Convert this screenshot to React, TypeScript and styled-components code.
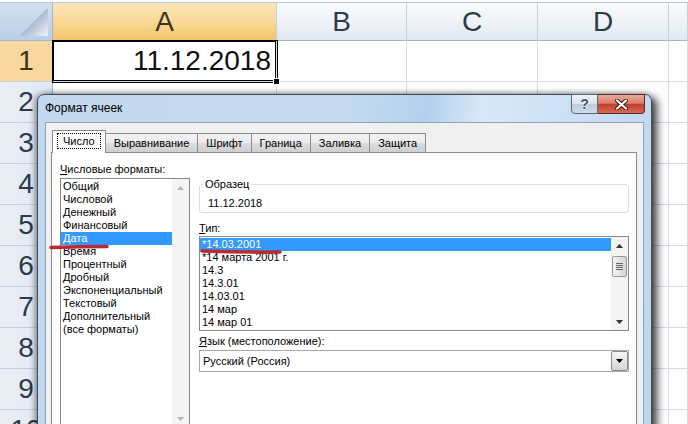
import React from 'react';
import styled, { createGlobalStyle } from 'styled-components';

const GlobalStyle = createGlobalStyle`
  html, body {
    margin: 0;
    padding: 0;
    width: 688px;
    height: 424px;
    overflow: hidden;
    background: #fff;
  }
  body {
    font-family: "Liberation Sans", Arial, sans-serif;
  }
`;

const columns = ['A', 'B', 'C', 'D', ''];
const rows = [1, 2, 3, 4, 5, 6, 7, 8, 9, 10];

const formats = [
    'Общий',
    'Числовой',
    'Денежный',
    'Финансовый',
    'Дата',
    'Время',
    'Процентный',
    'Дробный',
    'Экспоненциальный',
    'Текстовый',
    'Дополнительный',
    '(все форматы)',
];

const types = [
    '*14.03.2001',
    '*14 марта 2001 г.',
    '14.3',
    '14.3.01',
    '14.03.01',
    '14 мар',
    '14 мар 01',
];

const tabs = ['Число', 'Выравнивание', 'Шрифт', 'Граница', 'Заливка', 'Защита'];

const Arrow = ({ dir, color }: { dir: 'up' | 'down'; color: string }) => (
    <svg width="7" height="4" viewBox="0 0 7 4">
        <path d={dir === 'up' ? 'M0 4 L3.5 0 L7 4 Z' : 'M0 0 L7 0 L3.5 4 Z'} fill={color} />
    </svg>
);

const App: React.FC = () => (
    <Page>
        <GlobalStyle />
        <Sheet>
            <Corner />
            {columns.map((c, i) => (
                <ColHeader key={c + i} $active={c === 'A'}>
                    {c}
                </ColHeader>
            ))}
            {rows.map((r) => (
                <React.Fragment key={r}>
                    <RowHeader $active={r === 1}>{r}</RowHeader>
                    {columns.map((c, i) => (
                        <Cell key={c + i} $selected={r === 1 && c === 'A'}>
                            {r === 1 && c === 'A' ? '11.12.2018' : ''}
                        </Cell>
                    ))}
                </React.Fragment>
            ))}
        </Sheet>

        <Dialog>
            <TitleBar>
                <Title>Формат ячеек</Title>
                <CaptionButtons>
                    <HelpButton>?</HelpButton>
                    <CloseButton>
                        <svg width="13" height="11" viewBox="0 0 13 11">
                            <path
                                d="M2 1.5 L11 9.5 M11 1.5 L2 9.5"
                                stroke="#3b1a16"
                                strokeWidth="4"
                                strokeLinecap="round"
                            />
                            <path
                                d="M2 1.5 L11 9.5 M11 1.5 L2 9.5"
                                stroke="#fff"
                                strokeWidth="2.2"
                                strokeLinecap="round"
                            />
                        </svg>
                    </CloseButton>
                </CaptionButtons>
            </TitleBar>
            <Client>
                <TabStrip>
                    {tabs.map((t, i) => (
                        <Tab key={t} $active={i === 0}>
                            {i === 0 ? <FocusRing>{t}</FocusRing> : t}
                        </Tab>
                    ))}
                </TabStrip>
                <Panel>
                    <LeftColumn>
                        <Label>
                            <u>Ч</u>исловые форматы:
                        </Label>
                        <ListBox $height={250}>
                            <ListItems>
                                {formats.map((f) => (
                                    <ListItem key={f} $selected={f === 'Дата'}>
                                        {f}
                                    </ListItem>
                                ))}
                            </ListItems>
                            <ScrollBar>
                                <ScrollArrow>
                                    <Arrow dir="up" color="#b5b5b5" />
                                </ScrollArrow>
                                <ScrollArrow>
                                    <Arrow dir="down" color="#b5b5b5" />
                                </ScrollArrow>
                            </ScrollBar>
                        </ListBox>
                    </LeftColumn>
                    <RightColumn>
                        <SampleGroup>
                            <Legend>Образец</Legend>
                            <SampleValue>11.12.2018</SampleValue>
                        </SampleGroup>
                        <Label $top={8} $bottom={1}>
                            <u>Т</u>ип:
                        </Label>
                        <ListBox $height={95}>
                            <ListItems>
                                {types.map((t, i) => (
                                    <ListItem key={t} $selected={i === 0}>
                                        {t}
                                    </ListItem>
                                ))}
                            </ListItems>
                            <ScrollBar>
                                <ScrollArrow>
                                    <Arrow dir="up" color="#333" />
                                </ScrollArrow>
                                <Thumb>
                                    <svg width="7" height="8" viewBox="0 0 7 8">
                                        <path
                                            d="M0 0.5 H7 M0 2.5 H7 M0 4.5 H7 M0 6.5 H7"
                                            stroke="#666"
                                            strokeWidth="1"
                                        />
                                    </svg>
                                </Thumb>
                                <Spacer />
                                <ScrollArrow>
                                    <Arrow dir="down" color="#333" />
                                </ScrollArrow>
                            </ScrollBar>
                        </ListBox>
                        <Label $top={3} $bottom={2}>
                            <u>Я</u>зык (местоположение):
                        </Label>
                        <Combo>
                            <ComboText>Русский (Россия)</ComboText>
                            <ComboButton>
                                <Arrow dir="down" color="#000" />
                            </ComboButton>
                        </Combo>
                    </RightColumn>
                </Panel>
            </Client>
        </Dialog>

        <Marks width="688" height="424" viewBox="0 0 688 424">
            <path d="M51 247.5 Q 80 246.5 107 246.5" />
            <path d="M202 251 Q 240 252.5 280 252" />
        </Marks>
    </Page>
);

const Page = styled.div`
    position: relative;
    width: 688px;
    height: 424px;
    overflow: hidden;
    background: #fff;
`;

const Sheet = styled.div`
    display: grid;
    grid-template-columns: 53px 224px 130px 131px 131px 19px;
    grid-template-rows: 39px repeat(10, 41px);
    padding-top: 2px;
    background: #fff;
    font-family: "Liberation Sans", Arial, sans-serif;
    font-size: 28px;
`;

const Corner = styled.div`
    box-sizing: border-box;
    border-top: 1px solid #b7c6d8;
    border-right: 1px solid #9eb6ce;
    border-bottom: 1px solid #9eb6ce;
    background:
        linear-gradient(135deg, transparent 50%, #aabbd2 50%, #eef2f8 100%) right 4px bottom 4px / 30px 27px no-repeat,
        linear-gradient(#d2e0f0, #bccfe6);
`;

const ColHeader = styled.div<{ $active?: boolean }>`
    box-sizing: border-box;
    display: flex;
    align-items: center;
    justify-content: center;
    border-top: 1px solid #b7c6d8;
    border-right: 1px solid #c3d0de;
    border-bottom: 1px solid #9eb6ce;
    color: ${(p) => (p.$active ? '#3a3419' : '#2c3a4a')};
    background: ${(p) =>
        p.$active
            ? 'linear-gradient(#fce6b8 0%, #f9d898 50%, #f3c56a 100%)'
            : 'linear-gradient(#f8fafc 0%, #eef2f7 55%, #dfe7f0 100%)'};
`;

const RowHeader = styled.div<{ $active?: boolean }>`
    box-sizing: border-box;
    display: flex;
    align-items: center;
    justify-content: center;
    border-right: 1px solid #9eb6ce;
    border-bottom: 1px solid #c3d0de;
    color: ${(p) => (p.$active ? '#3a3419' : '#2c3a4a')};
    background: ${(p) => (p.$active ? '#f8d89e' : 'linear-gradient(90deg, #e9eef5, #e2e9f2)')};
`;

const Cell = styled.div<{ $selected?: boolean }>`
    position: relative;
    box-sizing: border-box;
    display: flex;
    align-items: center;
    justify-content: flex-end;
    padding-right: 5px;
    border-right: 1px solid #d4dbe6;
    border-bottom: 1px solid #d4dbe6;
    color: #111;
    ${(p) =>
        p.$selected &&
        `
        z-index: 1;
        box-shadow: 0 0 0 1px #000, inset 0 0 0 1px #000;
        &::after {
            content: '';
            position: absolute;
            right: -4px;
            bottom: -4px;
            width: 5px;
            height: 5px;
            background: #000;
            border: 1px solid #fff;
        }
    `}
`;

const Dialog = styled.section`
    position: absolute;
    left: 37px;
    top: 94px;
    width: 615px;
    height: 360px;
    box-sizing: border-box;
    display: flex;
    flex-direction: column;
    padding: 0 7px;
    border: 1px solid #3e4b5d;
    border-radius: 7px 7px 0 0;
    background: linear-gradient(
        100deg,
        #c2d8ee 0%,
        #c6dbf0 45%,
        #b3d0ee 58%,
        #d8e8f8 66%,
        #cde1f5 78%,
        #bcd4ed 100%
    );
    box-shadow: 5px 3px 8px rgba(0, 0, 0, 0.75), -2px 0 6px rgba(0, 0, 0, 0.4);
    font-family: "Liberation Sans", Arial, sans-serif;
    font-size: 11px;
    color: #000;
    z-index: 5;
`;

const TitleBar = styled.header`
    display: flex;
    align-items: flex-start;
    justify-content: space-between;
    height: 27px;
`;

const Title = styled.h1`
    margin: 0;
    font-size: 12px;
    font-weight: normal;
    line-height: 27px;
    color: #000;
`;

const CaptionButtons = styled.div`
    display: flex;
    margin-top: -1px;
    margin-right: -1px;
`;

const HelpButton = styled.div`
    box-sizing: border-box;
    display: flex;
    align-items: center;
    justify-content: center;
    width: 27px;
    height: 20px;
    border: 1px solid #5d6a7b;
    border-radius: 0 0 0 4px;
    background: linear-gradient(#eef3f8 0%, #d9e3ee 50%, #bfcddc 51%, #cfdbe8 100%);
    font-size: 14px;
    font-weight: bold;
    color: #46536a;
    text-shadow: 0 0 2px #fff, 0 0 1px #fff;
`;

const CloseButton = styled.div`
    box-sizing: border-box;
    display: flex;
    align-items: center;
    justify-content: center;
    width: 47px;
    height: 20px;
    border: 1px solid #5b2a24;
    border-left: none;
    border-radius: 0 0 4px 0;
    background: linear-gradient(#e9a99c 0%, #d9806f 45%, #c2402f 52%, #d56a52 100%);
`;

const Client = styled.div`
    flex: 1;
    display: flex;
    flex-direction: column;
    padding: 7px 6px 0 5px;
    border: 1px solid #8ea3ba;
    background: #f0f0f0;
`;

const TabStrip = styled.div`
    position: relative;
    z-index: 1;
    display: flex;
    align-items: flex-end;
    height: 23px;
    margin-bottom: -1px;
    padding-left: 1px;
`;

const Tab = styled.div<{ $active?: boolean }>`
    position: relative;
    box-sizing: border-box;
    display: flex;
    align-items: center;
    height: ${(p) => (p.$active ? '23px' : '20px')};
    padding: ${(p) => (p.$active ? '0 4px 2px' : '0 8px')};
    margin-right: -1px;
    border: 1px solid #898c95;
    border-bottom: ${(p) => (p.$active ? 'none' : '1px solid #898c95')};
    background: ${(p) =>
        p.$active ? '#fff' : 'linear-gradient(#f3f3f3 0%, #ebebeb 50%, #dddddd 51%, #cfcfcf 100%)'};
    z-index: ${(p) => (p.$active ? 2 : 1)};
    white-space: nowrap;
`;

const FocusRing = styled.span`
    padding: 1px 5px;
    border: 1px dotted #000;
`;

const Panel = styled.div`
    flex: 1;
    display: flex;
    align-items: flex-start;
    gap: 9px;
    padding: 9px 7px 0 8px;
    border: 1px solid #898c95;
    background: #fff;
`;

const LeftColumn = styled.div`
    display: flex;
    flex-direction: column;
    width: 130px;
`;

const RightColumn = styled.div`
    flex: 1;
    display: flex;
    flex-direction: column;
    padding-top: 15px;
`;

const Label = styled.div<{ $top?: number; $bottom?: number }>`
    line-height: 14px;
    margin-top: ${(p) => p.$top ?? 0}px;
    margin-bottom: ${(p) => p.$bottom ?? 2}px;
    white-space: nowrap;
`;

const ListBox = styled.div<{ $height: number }>`
    box-sizing: border-box;
    display: flex;
    height: ${(p) => p.$height}px;
    border: 1px solid #828790;
    background: #fff;
`;

const ListItems = styled.div`
    flex: 1;
    padding-top: 1px;
`;

const ListItem = styled.div<{ $selected?: boolean }>`
    height: 13px;
    line-height: 13px;
    padding-left: 2px;
    white-space: nowrap;
    color: ${(p) => (p.$selected ? '#fff' : '#000')};
    background: ${(p) => (p.$selected ? '#3399ff' : 'transparent')};
`;

const ScrollBar = styled.div`
    display: flex;
    flex-direction: column;
    justify-content: space-between;
    width: 17px;
    background: #f4f4f4;
`;

const ScrollArrow = styled.div`
    display: flex;
    align-items: center;
    justify-content: center;
    height: 17px;
`;

const Thumb = styled.div`
    box-sizing: border-box;
    display: flex;
    align-items: center;
    justify-content: center;
    height: 21px;
    margin: 2px 1px 0;
    border: 1px solid #979797;
    border-radius: 2px;
    background: linear-gradient(90deg, #f4f4f4, #e4e4e4 50%, #d6d6d6);
`;

const Spacer = styled.div`
    flex: 1;
`;

const SampleGroup = styled.fieldset`
    margin: 0;
    min-width: 0;
    padding: 0 8px 2px;
    border: 1px solid #d5dfe5;
    border-radius: 3px;
`;

const Legend = styled.legend`
    margin-left: -5px;
    padding: 0 2px;
    line-height: 14px;
`;

const SampleValue = styled.div`
    margin-top: 5px;
    line-height: 14px;
`;

const Combo = styled.div`
    box-sizing: border-box;
    display: flex;
    align-items: stretch;
    height: 22px;
    border: 1px solid #a7a7a7;
    background: #fff;
`;

const ComboText = styled.div`
    flex: 1;
    display: flex;
    align-items: center;
    padding-left: 3px;
`;

const ComboButton = styled.div`
    box-sizing: border-box;
    display: flex;
    align-items: center;
    justify-content: center;
    width: 17px;
    border: 1px solid #8b8b8b;
    border-radius: 2px;
    background: linear-gradient(#f4f4f4 0%, #e6e6e6 50%, #d4d4d4 100%);
`;

const Marks = styled.svg`
    position: absolute;
    left: 0;
    top: 0;
    z-index: 10;
    pointer-events: none;
    fill: none;
    stroke: #bb2a30;
    stroke-width: 3.5;
    stroke-linecap: round;
`;

export default App;
